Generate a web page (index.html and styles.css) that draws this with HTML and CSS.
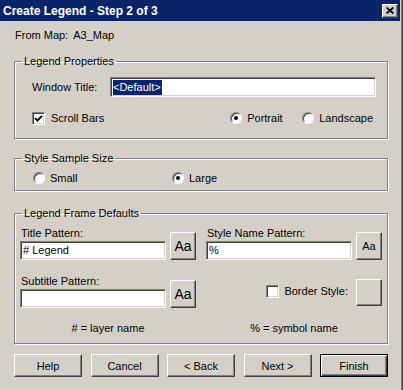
FILE: index.html
```html
<!DOCTYPE html>
<html lang="en">
<head>
  <meta charset="UTF-8" />
  <title>Create Legend - Step 2 of 3</title>
  <link rel="stylesheet" href="styles.css">
</head>
<body>
  <div class="window">
    <div class="frame">
      <div class="titlebar">
        <span class="title">Create Legend - Step 2 of 3</span>
        <span class="close">
          <svg width="8" height="7" viewBox="0 0 8 7"><path d="M0.6 0.5L7.4 6.5M7.4 0.5L0.6 6.5" stroke="#000" stroke-width="1.7" fill="none"/></svg>
        </span>
      </div>

      <div class="content">
        <div class="from"><span class="from-label">From Map:</span><span>A3_Map</span></div>

        <fieldset class="group">
          <legend>Legend Properties</legend>
          <div class="group-body props">
            <div class="row">
              <span class="win-label">Window Title:</span>
              <div class="field grow"><span class="sel">&lt;Default&gt;</span></div>
            </div>
            <div class="row gap-top">
              <span class="opt">
                <span class="check"><svg width="9" height="9" viewBox="0 0 9 9"><path d="M1 4.2L3.4 6.6L8 1.8" stroke="#000" stroke-width="1.8" fill="none"/></svg></span>
                Scroll Bars
              </span>
              <span class="orient">
                <span class="opt portrait"><span class="radio on"></span>Portrait</span>
                <span class="opt"><span class="radio"></span>Landscape</span>
              </span>
            </div>
          </div>
        </fieldset>

        <fieldset class="group">
          <legend>Style Sample Size</legend>
          <div class="group-body sizes">
            <span class="opt small"><span class="radio"></span>Small</span>
            <span class="opt"><span class="radio on"></span>Large</span>
          </div>
        </fieldset>

        <fieldset class="group">
          <legend>Legend Frame Defaults</legend>
          <div class="group-body frame-defaults">
            <div class="pattern">
              <div class="stack">
                <span class="lbl">Title Pattern:</span>
                <div class="field">#&nbsp;Legend</div>
              </div>
              <span class="btn aa big">Aa</span>
            </div>
            <div class="pattern">
              <div class="stack">
                <span class="lbl">Style Name Pattern:</span>
                <div class="field">%</div>
              </div>
              <span class="btn aa">Aa</span>
            </div>

            <div class="pattern second">
              <div class="stack">
                <span class="lbl">Subtitle Pattern:</span>
                <div class="field"></div>
              </div>
              <span class="btn aa big">Aa</span>
            </div>
            <div class="border-style second">
              <span class="check"></span>
              <span>Border Style:</span>
              <span class="btn swatch"></span>
            </div>

            <div class="note">#&nbsp;= layer name</div>
            <div class="note">%&nbsp;= symbol name</div>
          </div>
        </fieldset>

        <div class="actions">
          <span class="btn">Help</span>
          <span class="btn">Cancel</span>
          <span class="btn">&lt; Back</span>
          <span class="btn">Next &gt;</span>
          <span class="btn default">Finish</span>
        </div>
      </div>
    </div>
  </div>
</body>
</html>
```

FILE: styles.css
```css
* {
  box-sizing: border-box;
}
body {
  margin: 0;
  font-family: 'Liberation Sans', Arial, sans-serif;
  font-size: 11px;
  line-height: 14px;
  color: #000;
  background: #d4d0c8;
}
.window {
  width: 403px;
  height: 390px;
  border-right: 1px solid #404040;
  overflow: hidden;
}
.frame {
  height: 100%;
  background: #d4d0c8;
  border-right: 1px solid #808080;
  padding-right: 1px;
}
.titlebar {
  height: 21px;
  background: #0a246a;
  color: #fff;
  display: flex;
  align-items: center;
  justify-content: space-between;
  padding: 0 2px 0 3px;
}
.title {
  font-weight: bold;
  font-size: 12px;
}
.close {
  width: 16px;
  height: 14px;
  background: #d4d0c8;
  border: 1px solid;
  border-color: #fff #404040 #404040 #fff;
  box-shadow: inset -1px -1px 0 #808080;
  display: flex;
  align-items: center;
  justify-content: center;
}
.content {
  padding: 7px 12px 0 14px;
}
.from {
  display: flex;
  gap: 5px;
  padding-left: 1px;
}

/* group boxes */
.group {
  margin: 12px 0 0;
  padding: 0;
  border: 1px solid #808080;
  box-shadow: inset 1px 1px 0 #fff, 1px 1px 0 #fff;
  min-width: 0;
}
.group + .group {
  margin-top: 12px;
}
.group:nth-of-type(3) {
  margin-top: 15px;
}
.group legend {
  margin-left: 7px;
  padding: 0 2px;
}
.group-body {
  display: flex;
}
.props {
  flex-direction: column;
  padding: 9px 11px 13px 17px;
}
.row {
  display: flex;
  align-items: center;
}
.gap-top {
  margin-top: 14px;
}
.win-label {
  width: 78px;
}
.grow {
  flex: 1;
}
.orient {
  margin-left: auto;
  margin-right: 3px;
  display: flex;
}
.portrait {
  width: 72px;
}
.sizes {
  padding: 6px 0 5px 18px;
}
.small {
  width: 139px;
}

/* inputs */
.field {
  height: 20px;
  background: #fff;
  border: 1px solid;
  border-color: #808080 #fff #fff #808080;
  box-shadow: inset 1px 1px 0 #404040, inset -1px -1px 0 #d4d0c8;
  padding: 2px 0 0 2px;
  line-height: 15px;
  white-space: nowrap;
}
.sel {
  display: inline-block;
  background: #0a246a;
  color: #fff;
  padding: 0 1px 0 0;
}
.opt {
  display: flex;
  align-items: center;
}
.check {
  width: 13px;
  height: 13px;
  margin-right: 6px;
  background: #fff;
  border: 1px solid;
  border-color: #808080 #fff #fff #808080;
  box-shadow: inset 1px 1px 0 #404040, inset -1px -1px 0 #d4d0c8;
  display: flex;
  align-items: center;
  justify-content: center;
}
.radio {
  width: 12px;
  height: 12px;
  margin-right: 5px;
  border-radius: 50%;
  background: #fff;
  border: 1px solid;
  border-color: #808080 #fff #fff #808080;
  box-shadow: inset 1px 1px 0 #404040;
  display: flex;
  align-items: center;
  justify-content: center;
}
.radio.on::after {
  content: "";
  width: 4px;
  height: 4px;
  border-radius: 50%;
  background: #000;
}

/* legend frame defaults */
.frame-defaults {
  display: grid;
  grid-template-columns: 176px 176px;
  column-gap: 10px;
  padding: 6px 5px 8px 5px;
}
.pattern {
  display: flex;
  align-items: flex-end;
  gap: 4px;
}
.stack {
  width: 146px;
}
.lbl {
  display: block;
  padding-left: 1px;
  margin-bottom: 1px;
}
.stack .field {
  height: 19px;
  padding-top: 1px;
}
.second {
  margin-top: 14px;
}
.border-style {
  display: flex;
  align-items: center;
  justify-content: flex-end;
}
.border-style .check {
  margin-right: 5px;
}
.border-style .swatch {
  margin-left: 8px;
  width: 26px;
  height: 27px;
  margin-top: 2px;
}
.note {
  text-align: center;
  margin-top: 13px;
}

/* buttons */
.btn {
  display: flex;
  align-items: center;
  justify-content: center;
  background: #d4d0c8;
  border: 1px solid;
  border-color: #fff #404040 #404040 #fff;
  box-shadow: inset -1px -1px 0 #808080;
}
.aa {
  width: 26px;
  height: 28px;
}
.aa.big {
  font-size: 14px;
}
.actions {
  display: flex;
  justify-content: space-between;
  margin-top: 10px;
}
.actions .btn {
  width: 68px;
  height: 23px;
}
.actions .default {
  border-color: #000;
  box-shadow: inset 1px 1px 0 #fff, inset -1px -1px 0 #404040, inset -2px -2px 0 #808080;
}
```
